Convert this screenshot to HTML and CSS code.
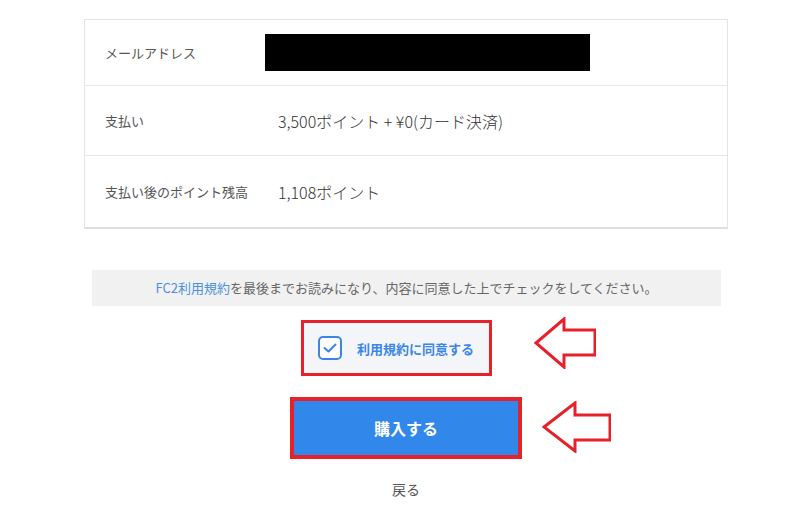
FILE: index.html
```html
<!DOCTYPE html>
<html lang="ja">

<head>
    <meta charset="utf-8">
    <title>購入確認</title>
    <link rel="stylesheet" href="styles.css">
</head>

<body>
    <div class="wrap">
        <div class="info">
            <div class="row row-mail">
                <div class="label">メールアドレス</div>
                <div class="value"><span class="masked"></span></div>
            </div>
            <div class="row row-pay">
                <div class="label">支払い</div>
                <div class="value">3,500ポイント + ¥0(カード決済)</div>
            </div>
            <div class="row row-rest">
                <div class="label">支払い後のポイント残高</div>
                <div class="value">1,108ポイント</div>
            </div>
        </div>

        <p class="notice"><a href="#">FC2利用規約</a>を最後までお読みになり、内容に同意した上でチェックをしてください。</p>

        <div class="agree-line">
            <label class="agree">
                <span class="check">
                    <svg width="14" height="10" viewBox="0 0 14 10">
                        <polyline points="1.5,5 5.5,8.5 12.5,1.5" fill="none" stroke="#3a86e8" stroke-width="2" stroke-linecap="round" stroke-linejoin="round" />
                    </svg>
                </span>
                <span class="agree-text">利用規約に同意する</span>
                <svg class="arrow arrow-agree" width="62" height="52" viewBox="-2 -2 62 52">
                    <polygon points="0,24 28,0 28,11 59,11 59,36 28,36 28,48" fill="#fff" stroke="#e8202a" stroke-width="3" />
                </svg>
            </label>
        </div>

        <div class="buy-line">
            <button class="buy">購入する
                <svg class="arrow arrow-buy" width="69" height="52" viewBox="-2 -2 69 52">
                    <polygon points="0,24 31,0 31,12 66,12 66,37 31,37 31,48" fill="#fff" stroke="#e8202a" stroke-width="3" />
                </svg>
            </button>
        </div>

        <p class="back"><a href="#">戻る</a></p>
    </div>
</body>

</html>
```

FILE: styles.css
```css
body {
    margin: 0;
    font-family: "Noto Sans CJK JP", "Noto Sans", sans-serif;
    background: #fff;
    color: #333;
}

.wrap {
    width: 644px;
    margin-left: 84px;
    padding-top: 19px;
}

.info {
    border: 1px solid #e4e4e4;
    border-bottom: 2px solid #e0e0e0;
}

.row {
    display: flex;
    align-items: center;
    border-bottom: 1px solid #e6e6e6;
}

.row:last-child {
    border-bottom: none;
}

.row-mail {
    height: 65px;
}

.row-pay {
    height: 69px;
}

.row-rest {
    height: 71px;
}

.label {
    width: 173px;
    padding-left: 20px;
    font-size: 13px;
    color: #555;
}

.value {
    font-size: 16px;
    font-weight: 300;
    color: #333;
}

.masked {
    display: block;
    width: 325px;
    height: 37px;
    margin-left: -13px;
    background: #000;
}

.notice {
    margin: 41px 7px 0 8px;
    height: 36px;
    line-height: 36px;
    background: #f1f1f1;
    text-align: center;
    font-size: 13px;
    color: #666;
}

.notice a {
    color: #4a8fe0;
    text-decoration: none;
}

.agree-line {
    display: flex;
    justify-content: center;
    margin-top: 14px;
    padding-right: 19px;
}

.agree {
    position: relative;
    display: flex;
    align-items: center;
    width: 185px;
    height: 50px;
    box-sizing: content-box;
    border: 3px solid #e8202a;
    background: #f4f5f8;
    cursor: pointer;
}

.check {
    display: flex;
    align-items: center;
    justify-content: center;
    width: 20px;
    height: 20px;
    margin-left: 14px;
    border: 2px solid #3a86e8;
    border-radius: 5px;
    background: #fff;
}

.agree-text {
    margin-left: 15px;
    font-size: 13px;
    font-weight: bold;
    color: #3a86e8;
}

.arrow {
    position: absolute;
}

.arrow-agree {
    left: 230px;
    top: -6px;
}

.buy-line {
    display: flex;
    justify-content: center;
    margin-top: 21px;
}

.buy {
    position: relative;
    width: 232px;
    height: 62px;
    border: 4px solid #e8202a;
    background: #3188ea;
    color: #fff;
    font-family: "Noto Sans CJK JP", "Noto Sans", sans-serif;
    font-size: 16px;
    font-weight: bold;
    cursor: pointer;
}

.arrow-buy {
    left: 248px;
    top: 0px;
}

.back {
    margin: 20px 0 0;
    text-align: center;
    font-size: 14px;
}

.back a {
    color: #555;
    text-decoration: none;
}
```
